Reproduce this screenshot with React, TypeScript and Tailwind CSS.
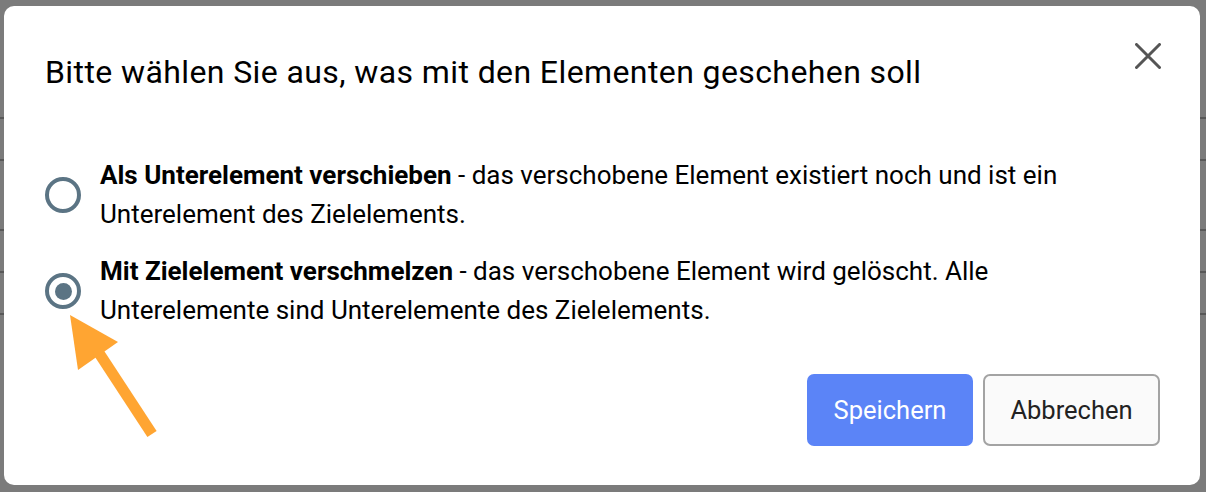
const rows = [117, 159, 229, 271, 313];

function Radio({ checked }: { checked?: boolean }) {
  return (
    <span className="flex h-[36px] w-[36px] shrink-0 items-center justify-center rounded-full border-[4px] border-[#5b7484]">
      {checked && <span className="h-[17px] w-[17px] rounded-full bg-[#5b7484]" />}
    </span>
  );
}

function Option({ checked, title, text }: { checked?: boolean; title: string; text: string }) {
  return (
    <label className="flex items-center gap-[19px]">
      <Radio checked={checked} />
      <p className="max-w-[990px] text-[26px] leading-[39px] text-black">
        <b className="font-bold">{title}</b> - {text}
      </p>
    </label>
  );
}

export default function App() {
  return (
    <div className="relative h-[492px] w-[1206px] overflow-hidden bg-[#7b7b7b] font-['Roboto',sans-serif]">
      {/* table behind the overlay */}
      <div className="flex flex-col">
        {rows.map((y, i) => (
          <div key={i} className="absolute inset-x-0 h-[2px] bg-[#585858]" style={{ top: y }} />
        ))}
      </div>

      <div className="absolute left-[4px] top-[6px] flex h-[479px] w-[1196px] flex-col rounded-[10px] bg-white pl-[41px] pr-[40px]">
        <div className="flex items-start justify-between pt-[46px]">
          <h2 className="text-[32px] leading-[40px] tracking-[0.4px] text-black">
            Bitte wählen Sie aus, was mit den Elementen geschehen soll
          </h2>
          <button className="mr-[-1px] mt-[-9px] text-[#555]">
            <svg width="26" height="26" viewBox="0 0 26 26" fill="none" stroke="currentColor" strokeWidth="3" strokeLinecap="round">
              <path d="M1.5 1.5 L24.5 24.5 M24.5 1.5 L1.5 24.5" />
            </svg>
          </button>
        </div>

        <div className="mt-[64px] flex flex-col gap-[18px]">
          <Option
            title="Als Unterelement verschieben"
            text="das verschobene Element existiert noch und ist ein Unterelement des Zielelements."
          />
          <Option
            checked
            title="Mit Zielelement verschmelzen"
            text="das verschobene Element wird gelöscht. Alle Unterelemente sind Unterelemente des Zielelements."
          />
        </div>

        <div className="mt-auto flex justify-end gap-[10px] pb-[39px]">
          <button className="h-[72px] w-[166px] rounded-[7px] bg-[#5b84f7] text-[25.5px] text-white">Speichern</button>
          <button className="h-[72px] w-[177px] rounded-[7px] border-2 border-[#a3a3a3] bg-[#fafafa] text-[25.5px] text-[#222]">
            Abbrechen
          </button>
        </div>
      </div>

      {/* annotation arrow */}
      <svg className="absolute left-0 top-0" width="1206" height="492">
        <polygon points="70,315 118,342 78,370" fill="#ffa532" />
        <line x1="97" y1="350" x2="152" y2="434" stroke="#ffa532" strokeWidth="11" />
      </svg>
    </div>
  );
}
